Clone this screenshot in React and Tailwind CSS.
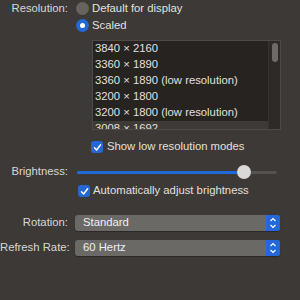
import React from 'react'

const rows = [
    '3840 × 2160',
    '3360 × 1890',
    '3360 × 1890 (low resolution)',
    '3200 × 1800',
    '3200 × 1800 (low resolution)',
    '3008 × 1692',
]

const Label = ({ children }) => (
    <div className="w-[68px] shrink-0 text-right text-[#d9d7d5] whitespace-nowrap">{children}</div>
)

const Check = () => (
    <div className="w-[12px] h-[12px] rounded-[3px] bg-[#2468d6] flex items-center justify-center shrink-0">
        <svg width="9" height="9" viewBox="0 0 9 9">
            <path d="M1.5 4.8 L3.6 7 L7.6 1.8" fill="none" stroke="white" strokeWidth="1.5" strokeLinecap="round" strokeLinejoin="round" />
        </svg>
    </div>
)

const Stepper = () => (
    <div className="w-[14px] h-full bg-[#2168d8] rounded-r-[3px] flex items-center justify-center">
        <svg width="8" height="12" viewBox="0 0 8 12">
            <path d="M1.5 4 L4 1.5 L6.5 4" fill="none" stroke="white" strokeWidth="1.2" />
            <path d="M1.5 8 L4 10.5 L6.5 8" fill="none" stroke="white" strokeWidth="1.2" />
        </svg>
    </div>
)

const Popup = ({ value }) => (
    <div className="ml-[7px] w-[205px] h-[16px] bg-[#6b6965] rounded-[3px] flex items-center shadow-[0_1px_1px_rgba(0,0,0,0.3)]">
        <div className="flex-1 pl-[8px] text-[#f0f0f0]">{value}</div>
        <Stepper />
    </div>
)

export default function App() {
    return (
        <div className="w-[300px] h-[300px] bg-[#3c3936] overflow-hidden pt-[2px] text-[11.3px] leading-none text-[#e2e0de]" style={{ fontFamily: '"Liberation Sans", Arial, sans-serif' }}>
            {/* Resolution */}
            <div className="flex items-center h-[13px]">
                <Label>Resolution:</Label>
                <div className="ml-[8px] w-[13px] h-[13px] rounded-full bg-[#67645f]" />
                <div className="ml-[3px]">Default for display</div>
            </div>
            <div className="flex items-center h-[13px] mt-[4px] pl-[76px]">
                <div className="w-[13px] h-[13px] rounded-full bg-[#2169d6] flex items-center justify-center">
                    <div className="w-[5px] h-[5px] rounded-full bg-white" />
                </div>
                <div className="ml-[3px]">Scaled</div>
            </div>

            {/* Resolution list */}
            <div className="mt-[8px] ml-[92px] w-[189px] h-[90px] border border-[#4d4a47] bg-[#262321] flex overflow-hidden">
                <div className="flex-1 flex flex-col">
                    {rows.map((r, i) => (
                        <div key={i} className={`h-[16px] shrink-0 flex items-center pl-[2px] ${i === 5 ? 'bg-[#3d3a37]' : ''}`}>
                            {r}
                        </div>
                    ))}
                </div>
                <div className="w-[12px] bg-[#2d2a28] border-l border-[#34312f] flex justify-center pt-[2px]">
                    <div className="w-[6px] h-[19px] rounded-full bg-[#6d6a67]" />
                </div>
            </div>

            {/* Show low resolution */}
            <div className="flex items-center mt-[11px] pl-[91px] h-[12px]">
                <Check />
                <div className="ml-[4px]">Show low resolution modes</div>
            </div>

            {/* Brightness */}
            <div className="flex items-center mt-[12px] h-[14px]">
                <Label>Brightness:</Label>
                <div className="ml-[9px] w-[200px] h-[14px] flex items-center">
                    <div className="w-[160px] h-[3px] bg-[#1f6ad8] rounded-l-full" />
                    <div className="w-[14px] h-[14px] rounded-full bg-[#dad9d8] shrink-0" />
                    <div className="w-[26px] h-[3px] bg-[#56534f] rounded-r-full" />
                </div>
            </div>

            {/* Auto brightness */}
            <div className="flex items-center mt-[6px] pl-[78px] h-[12px]">
                <Check />
                <div className="ml-[3px]">Automatically adjust brightness</div>
            </div>

            {/* Rotation */}
            <div className="flex items-center mt-[18px] h-[16px]">
                <Label>Rotation:</Label>
                <Popup value="Standard" />
            </div>

            {/* Refresh Rate */}
            <div className="flex items-center mt-[9px] h-[16px]">
                <Label>Refresh Rate:</Label>
                <Popup value="60 Hertz" />
            </div>
        </div>
    )
}
